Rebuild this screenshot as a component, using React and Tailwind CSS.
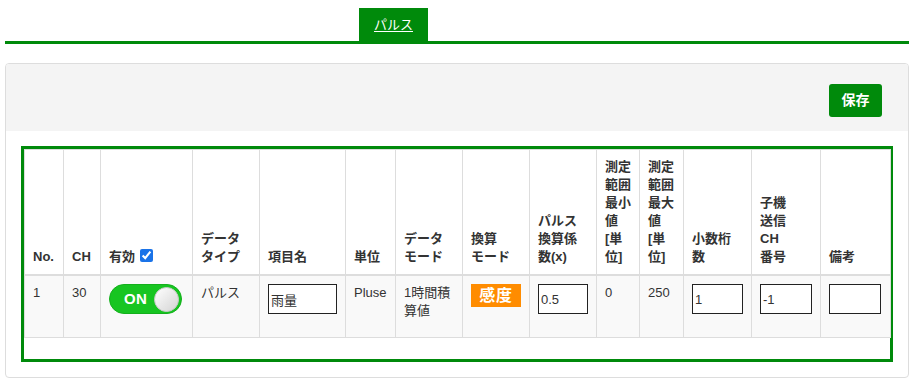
import React from "react"

const font = { fontFamily: '"Liberation Sans", "Noto Sans CJK JP", sans-serif' }

const headers = [
  { w: "w-[39px]", label: ["No."] },
  { w: "w-[37px]", label: ["CH"] },
  { w: "w-[92px]", label: ["有効"], check: true },
  { w: "w-[67px]", label: ["データ", "タイプ"] },
  { w: "w-[86px]", label: ["項目名"] },
  { w: "w-[50px]", label: ["単位"] },
  { w: "w-[67px]", label: ["データ", "モード"] },
  { w: "w-[67px]", label: ["換算", "モード"] },
  { w: "w-[67px]", label: ["パルス", "換算係", "数(x)"] },
  { w: "w-[43px]", label: ["測定", "範囲", "最小", "値", "[単", "位]"] },
  { w: "w-[44px]", label: ["測定", "範囲", "最大", "値", "[単", "位]"] },
  { w: "w-[68px]", label: ["小数桁", "数"] },
  { w: "w-[69px]", label: ["子機", "送信", "CH", "番号"] },
  { w: "w-[70px]", label: ["備考"] },
]

function Field({ value, w }) {
  return (
    <input
      type="text"
      defaultValue={value}
      className={`${w} h-[30px] border border-[#222] bg-white px-[2px] text-[13px] text-[#333] outline-none`}
      style={font}
    />
  )
}

function Toggle() {
  return (
    <div className="flex items-center w-[73px] h-[30px] rounded-full bg-[#17c521] border border-[#14b01c] pl-[14px] pr-[2px] justify-between">
      <span className="text-white font-bold text-[15px] tracking-wide">ON</span>
      <span className="w-[25px] h-[25px] rounded-full bg-gradient-to-br from-white to-[#d4d4d4] border border-[#c8c8c8]" />
    </div>
  )
}

export default function App() {
  const td = "border-x border-[#ddd] px-2 pt-2 align-top text-[13px] leading-[18px] text-[#333]"

  return (
    <div className="w-[917px] h-[386px] bg-white" style={font}>
      <div className="ml-[5px] w-[904px] pt-[8px]">
        <div className="flex">
          <div className="ml-[354px] w-[69px] h-[33px] bg-[#008a0b] flex items-center justify-center">
            <span className="text-white text-[13px] underline underline-offset-2">パルス</span>
          </div>
        </div>
        <div className="h-[3px] bg-[#008a0b]" />

        <div className="mt-[19px] h-[315px] border border-[#ddd] rounded-[4px] overflow-hidden">
          <div className="h-[67px] bg-[#f4f4f4] flex justify-end items-start pt-[20px] pr-[26px]">
            <button className="w-[53px] h-[33px] bg-[#008a0b] rounded-[3px] text-white text-[14px] font-bold">保存</button>
          </div>

          <div className="px-[15px] pt-[15px]">
            <div className="border-[3px] border-[#008a0b] h-[216px]">
              <table className="table-fixed w-full border-collapse">
                <thead>
                  <tr className="border-t border-[#ddd]">
                    {headers.map((h, i) => (
                      <th
                        key={i}
                        className={`${h.w} border-x border-b-2 border-[#ddd] px-2 pb-2 pt-2 align-bottom text-left font-bold text-[13px] leading-[18px] text-[#333]`}
                      >
                        {h.label.map((l, j) => (
                          <div key={j} className="whitespace-nowrap">
                            {l}
                            {h.check && (
                              <input type="checkbox" defaultChecked className="ml-[5px] w-[13px] h-[13px] align-[-1px] accent-[#1a73e8]" />
                            )}
                          </div>
                        ))}
                      </th>
                    ))}
                  </tr>
                </thead>
                <tbody>
                  <tr className="h-[62px] bg-[#f9f9f9] border-b border-[#ddd]">
                    <td className={td}>1</td>
                    <td className={td}>30</td>
                    <td className={td}>
                      <Toggle />
                    </td>
                    <td className={td}>パルス</td>
                    <td className={td}>
                      <Field value="雨量" w="w-[69px]" />
                    </td>
                    <td className={td}>Pluse</td>
                    <td className={td}>
                      1時間積
                      <br />
                      算値
                    </td>
                    <td className={td}>
                      <span className="inline-flex items-center justify-center w-[50px] h-[23px] bg-[#ff8c00] text-white text-[16px] font-bold tracking-wider">感度</span>
                    </td>
                    <td className={td}>
                      <Field value="0.5" w="w-[50px]" />
                    </td>
                    <td className={td}>0</td>
                    <td className={td}>250</td>
                    <td className={td}>
                      <Field value="1" w="w-[51px]" />
                    </td>
                    <td className={td}>
                      <Field value="-1" w="w-[52px]" />
                    </td>
                    <td className={td}>
                      <Field value="" w="w-[52px]" />
                    </td>
                  </tr>
                </tbody>
              </table>
            </div>
          </div>
        </div>
      </div>
    </div>
  )
}
